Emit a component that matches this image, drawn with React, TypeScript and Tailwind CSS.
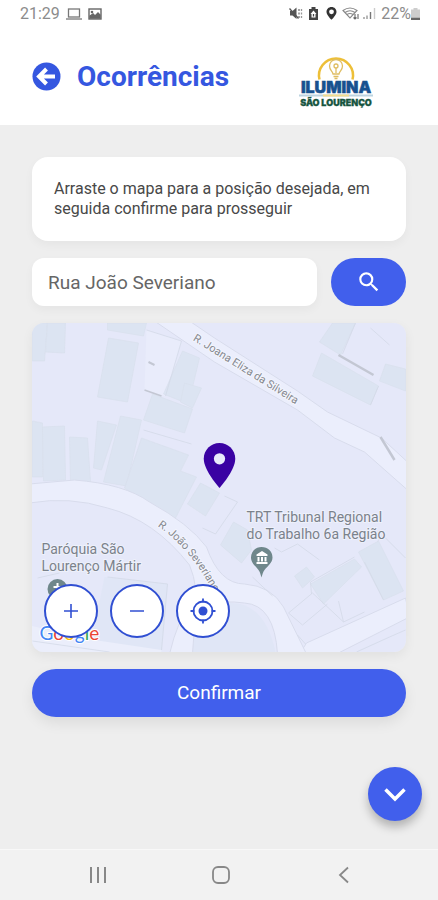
import React from "react";
import { MdSearch } from "react-icons/md";

const PIN = "M12 2C8.13 2 5 5.13 5 9c0 5.25 7 13 7 13s7-7.75 7-13c0-3.87-3.13-7-7-7z";

// Building footprints on the map
const buildings = [
  "33,323 48,323 45,361 33,361",
  "48,323 66,323 65,353 46,352",
  "108,323 147,323 144,336 108,330",
  "109,338 139,343 128,402 98,397",
  "183,351 200,358 189,404 164,394",
  "185,383 202,388 193,408 181,402",
  "153,394 193,409 185,433 144,420",
  "33,421 43,423 43,477 33,477",
  "43,427 65,426 66,480 44,481",
  "70,437 88,438 91,482 71,483",
  "98,421 117,425 102,470 94,468",
  "121,416 142,420 127,486 104,482",
  "142,438 189,455 181,471 197,477 176,518 158,510 125,488",
  "201,483 220,493 206,516 188,504",
  "234,522 248,530 252,550 242,563 221,545",
  "333,323 356,323 341,355 320,342",
  "322,353 379,386 371,405 313,376",
  "386,364 406,369 406,391 380,381",
  "295,576 307,567 315,577 303,588",
  "311,584 355,559 362,567 324,604",
  "359,552 379,541 404,591 384,600",
];

const outlines = [
  "M147 330 L182 341 L166 396",
  "M144 430 L192 444",
  "M108 577 L168 584 L162 650",
  "M38 578 L60 573",
  "M33 641 L110 652",
  "M203 528 L216 534 L238 502 L225 496",
  "M253 577 L273 596",
  "M289 613 L313 593 L344 622 L365 612",
  "M289 613 L303 625 L328 604",
  "M298 635 L306 644",
  "M275 548 L282 552 L298 544 L320 560",
  "M312 594 L311 582 L355 557",
  "M339 601 L344 622",
  "M378 541 L384 536 L406 558",
  "M384 600 L365 562",
  "M357 652 L390 637 L406 630",
  "M356 323 L343 354",
  "M379 386 L371 405",
  "M371 328 L390 345",
];

const MapDrawing: React.FC = () => (
  <svg
    viewBox="32 323 375 329"
    preserveAspectRatio="xMidYMid slice"
    className="block w-full h-full"
    fontFamily="Roboto, sans-serif"
    role="img"
    aria-label="Mapa"
  >
    <rect x="-200" y="100" width="900" height="800" fill="#e5e8f9" />
    <path d="M147 330 L182 341 L166 396 L145 390 Z" fill="#e9ecfb" />
    <path d="M105 577 L168 584 L162 652 L90 652 Z" fill="#e0e6f6" />
    <path d="M230 603 Q265 602 276 652 L180 652 Z" fill="#e0e6f6" />
    {buildings.map((points) => (
      <polygon key={points} points={points} fill="#dce4f2" stroke="#d8dfec" strokeWidth="0.7" />
    ))}

    {/* Streets */}
    <g fill="#ebeefc" stroke="#d8dcec" strokeWidth="1">
      <path d="M307 643 L406 598 L410 617 L337 654 L300 654 Z" />
      <path d="M155 321 L215 362 L298 410 L335 438 L365 452 L408 490 L408 462 L382 438 L328 412 L298 391 L215 338 L190 321 Z" />
      <path d="M30 484 L75 480 Q125 484 150 502 Q190 524 207 547 Q220 584 245 584 Q272 586 284 607 L307 654 L278 654 Q275 605 245 603 Q224 600 205 605 Q194 620 193 654 L170 654 Q178 620 193 600 Q200 590 190 565 Q155 520 108 508 Q70 496 30 503 Z" />
    </g>
    <path d="M32 626 L88 639 L162 650 L162 654 L32 654 Z" fill="#ebeefb" />
    <g fill="none" stroke="#d3d9e7" strokeWidth="0.8">
      {outlines.map((d) => (
        <path key={d} d={d} />
      ))}
    </g>
    <g fill="none" stroke="#c3c7d3" strokeWidth="2.5">
      <path d="M339 355 L374 375" />
      <path d="M381 437 L395 460" />
      <path d="M145 390 L162 396" strokeWidth="1.5" />
      <path d="M149 362 L155 365" strokeWidth="2" />
    </g>

    {/* Street names */}
    <path id="joana" d="M193 340 L302 408" fill="none" />
    <path id="severiano" d="M158 526 Q192 549 216 596" fill="none" />
    <g fontSize="11" fill="#85888f" stroke="#f3f5fd" strokeWidth="2" paintOrder="stroke">
      <text>
        <textPath href="#joana">R. Joana Eliza da Silveira</textPath>
      </text>
      <text>
        <textPath href="#severiano">R. João Severiano</textPath>
      </text>
    </g>

    {/* Places */}
    <g fontSize="14" fill="#7b828b" stroke="#eef1fb" strokeWidth="2" paintOrder="stroke">
      <text x="42" y="554">Paróquia São</text>
      <text x="42" y="571">Lourenço Mártir</text>
      <text x="247" y="522">TRT Tribunal Regional</text>
      <text x="247" y="539">do Trabalho 6a Região</text>
    </g>
    <circle cx="58" cy="589" r="10" fill="#6f878b" />
    <path d="M58 583 V594 M54 587 H62" stroke="#fff" strokeWidth="2" />
    <path
      d="M262 547 C256 547 251.500 551.500 251.500 557.500 C251.500 563 256 566 259 570 C260.500 572 261 574 262 577.500 C263 574 263.500 572 265 570 C268 566 273 563 273 557.500 C273 551.500 268.500 547 262 547 Z"
      fill="#6f878b"
    />
    <path d="M262.500 551 L268 554.500 V556 H257 V554.500 Z M258 557 h2 v4.500 h-2 z M261.500 557 h2 v4.500 h-2 z M265 557 h2 v4.500 h-2 z M257 562 h11 v2 h-11 z" fill="#fff" />

    <text x="40" y="640" fontFamily="Lato, sans-serif" fontSize="19" stroke="#fff" strokeWidth="2" paintOrder="stroke">
      <tspan fill="#4285f4">G</tspan>
      <tspan fill="#ea4335">o</tspan>
      <tspan fill="#fbbc05">o</tspan>
      <tspan fill="#4285f4">g</tspan>
      <tspan fill="#34a853">l</tspan>
      <tspan fill="#ea4335">e</tspan>
    </text>

    {/* Selected position */}
    <g transform="translate(193 438.500) scale(2.25)">
      <path d={PIN} fill="#3a02a3" />
      <circle cx="12" cy="9" r="2.500" fill="#e9ecfb" />
    </g>
  </svg>
);

const StatusBar: React.FC = () => (
  <div className="flex items-center justify-between h-7 pl-5 pr-[18px] text-base leading-7 text-[#8c8c8c]">
    <div className="flex items-center gap-1.5">
      <span>21:29</span>
      <svg width="16" height="14" viewBox="0 0 16 14" fill="none" stroke="#777" strokeWidth="1.300">
        <rect x="2.500" y="2" width="11" height="8" />
        <path d="M0 12h16" />
      </svg>
      <svg width="14" height="14" viewBox="0 0 14 14" fill="none" stroke="#666" strokeWidth="1.400">
        <rect x="1" y="2" width="12" height="10" />
        <path d="M2 11V9l3-2 2 2 3-3 2 2v3z" fill="#666" />
        <circle cx="4" cy="5" r="0.600" />
      </svg>
    </div>
    <div className="flex items-center">
      <svg width="92" height="16" viewBox="286 5 92 16" fill="none">
        <path d="M287 10h2.500l4-3.500v11.500l-4-3.500h-2.500z" fill="#555" />
        <path d="M286.500 7.500l9 10" stroke="#555" strokeWidth="1.300" />
        <path d="M296 8v10" stroke="#777" strokeWidth="1.300" strokeDasharray="2 1.500" />
        <path d="M298.500 8v10" stroke="#999" strokeWidth="1.300" strokeDasharray="2 1.500" />
        <path d="M308.500 6h4v2h2.500V19h-9V8h2.500z" fill="#444" />
        <path d="M310.500 9.500l3 3.500h-1v3.500h-4V13h-1z" fill="#fff" />
        <path d="M310.500 13v2.500" stroke="#444" strokeWidth="1.300" />
        <path d="M328.500 6c-3 0-5 2.200-5 4.900 0 3.200 5 7.800 5 7.800s5-4.600 5-7.800c0-2.700-2-4.900-5-4.900z" fill="#333" />
        <circle cx="328.500" cy="10.800" r="2.400" fill="#fff" />
        <g stroke="#888" strokeWidth="1.100">
          <path d="M340 9.500q7-5 14 0L347 17z" />
          <path d="M342 11.500q5-3.500 10 0M344 13.500q3-2 6 0" />
          <path d="M352 13v5m-1.500-1.500L352 18l1.500-1.500M355 18v-5" stroke="#666" />
        </g>
        <path d="M361 16v2M364 14.500v3.500" stroke="#999" strokeWidth="1.400" />
        <path d="M367.500 11v7" stroke="#777" strokeWidth="1.400" />
        <path d="M371.500 7v11" stroke="#ccc" strokeWidth="1.400" />
      </svg>
      <span>22%</span>
      <svg width="9" height="13" viewBox="0 0 9 13">
        <path d="M2.500 0h4v1.500H9V9H0V1.500h2.500z" fill="#cdcdcd" />
        <path d="M0 9.500h9V12H0z" fill="#666" />
      </svg>
    </div>
  </div>
);

const Logo: React.FC = () => (
  <svg width="76" height="62" viewBox="298 46 76 62" role="img" aria-label="Ilumina São Lourenço">
    <path d="M319.500 79.500 A17 17 0 1 1 352.500 79.500" fill="none" stroke="#edbf38" strokeWidth="2.500" />
    <g fill="none" stroke="#dfbd62" strokeWidth="1.300">
      <path d="M333 74 C332.500 71 329.500 70 329.500 66 A6.500 6.500 0 0 1 342.500 66 C342.500 70 339.500 71 339 74 Z" />
      <path d="M333.500 76.500h5M334.500 78.500h3" />
      <circle cx="336" cy="66" r="2" />
      <path d="M336 68v5" />
    </g>
    <text x="336" y="93" textAnchor="middle" fontFamily="Inter, sans-serif" fontSize="16" fontWeight="900" fill="#17518f" stroke="#17518f" strokeWidth="0.500">
      ILUMINA
    </text>
    <path d="M299 95.500H373" stroke="#bcd3e0" strokeWidth="2" />
    <path d="M323 95.500H349" stroke="#f3dc8f" strokeWidth="2" />
    <text x="336" y="106" textAnchor="middle" fontFamily="Inter, sans-serif" fontSize="9" fontWeight="900" fill="#17553f" stroke="#17553f" strokeWidth="0.300">
      SÃO LOURENÇO
    </text>
  </svg>
);

const mapButton =
  "flex items-center justify-center w-[54px] h-[54px] rounded-full bg-white border-2 border-[#304fd2] text-[#304fd2]";

const App: React.FC = () => {
  return (
    <div className="flex flex-col min-h-screen bg-[#eeeeee] font-[Roboto,sans-serif]">
      <header className="bg-white h-[125px]">
        <StatusBar />
        <div className="flex items-center justify-between h-[97px] pl-8 pr-16">
          <div className="flex items-center gap-4">
            <button aria-label="Voltar">
              <svg width="29" height="29" viewBox="0 0 29 29" fill="none">
                <circle cx="14.500" cy="14.500" r="14" fill="#3557e0" />
                <path d="M23 14.500H8M14.500 7L7 14.500L14.500 22" stroke="#fff" strokeWidth="4" />
              </svg>
            </button>
            <h1 className="text-[28px] leading-8 font-bold text-[#3557e0]">Ocorrências</h1>
          </div>
          <Logo />
        </div>
      </header>

      <main className="relative flex flex-col flex-1 gap-[17px] px-8 py-8">
        <p className="bg-white rounded-2xl px-[22px] py-[22px] text-base leading-5 text-[#484848] shadow-[0_4px_10px_rgba(0,0,0,0.04)]">
          Arraste o mapa para a posição desejada, em seguida confirme para prosseguir
        </p>

        {/* Address search */}
        <div className="flex gap-3.5">
          <input
            type="text"
            aria-label="Endereço"
            defaultValue="Rua João Severiano"
            className="flex-1 min-w-0 h-12 px-4 bg-white rounded-xl text-[19px] text-[#666666] outline-none shadow-[0_4px_10px_rgba(0,0,0,0.04)]"
          />
          <button
            aria-label="Buscar"
            className="flex items-center justify-center w-[75px] h-12 rounded-full bg-[#415fec] text-white"
          >
            <MdSearch size={26} />
          </button>
        </div>

        {/* Map */}
        <div className="relative h-[329px] rounded-xl overflow-hidden shadow-[0_4px_12px_rgba(0,0,0,0.06)]">
          <MapDrawing />
          <div className="absolute left-3 bottom-3.5 flex gap-3">
            <button aria-label="Aumentar zoom" className={mapButton}>
              <svg width="16" height="16" viewBox="0 0 16 16" stroke="currentColor" strokeWidth="1.600">
                <path d="M8 1v14M1 8h14" />
              </svg>
            </button>
            <button aria-label="Diminuir zoom" className={mapButton}>
              <svg width="16" height="16" viewBox="0 0 16 16" stroke="currentColor" strokeWidth="1.600">
                <path d="M1 8h14" />
              </svg>
            </button>
            <button aria-label="Minha localização" className={mapButton}>
              <svg width="26" height="26" viewBox="0 0 26 26" fill="none" stroke="currentColor" strokeWidth="1.800">
                <circle cx="13" cy="13" r="9.500" />
                <circle cx="13" cy="13" r="4.500" fill="currentColor" stroke="none" />
                <path d="M13 0.500v4M13 21.500v4M0.500 13h4M21.500 13h4" />
              </svg>
            </button>
          </div>
        </div>

        <button className="h-12 rounded-full bg-[#415fec] text-white text-[19px] shadow-[0_6px_14px_rgba(0,0,0,0.08)]">
          Confirmar
        </button>

        <button
          aria-label="Descer"
          className="absolute right-4 bottom-7 flex items-center justify-center w-[54px] h-[54px] rounded-full bg-[#415fec] shadow-[0_6px_10px_rgba(0,0,0,0.25)]"
        >
          <svg width="24" height="24" viewBox="0 0 24 24" fill="none" stroke="#fff" strokeWidth="3.500">
            <path d="M2.500 7.500L12 17L21.500 7.500" />
          </svg>
        </button>
      </main>

      {/* System navigation */}
      <nav className="flex items-center justify-between h-[51px] pl-[86px] pr-[82px] bg-[#f2f2f2] border-t border-[#f8f8f8]">
        <button aria-label="Recentes">
          <svg width="24" height="24" viewBox="0 0 24 24" fill="none" stroke="#888" strokeWidth="2">
            <path d="M5 4v16M12 4v16M19 4v16" />
          </svg>
        </button>
        <button aria-label="Início">
          <svg width="24" height="24" viewBox="0 0 24 24" fill="none" stroke="#888" strokeWidth="1.800">
            <rect x="4" y="4" width="16" height="16" rx="5" />
          </svg>
        </button>
        <button aria-label="Retornar">
          <svg width="24" height="24" viewBox="0 0 24 24" fill="none" stroke="#888" strokeWidth="1.800">
            <path d="M16 4.500L8 12L16 19.500" />
          </svg>
        </button>
      </nav>
    </div>
  );
};

export default App;
